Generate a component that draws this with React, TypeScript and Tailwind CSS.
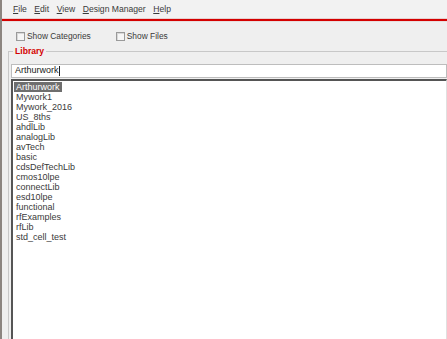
import { useState } from 'react';

const MENUS = [
  { key: 'F', rest: 'ile' },
  { key: 'E', rest: 'dit' },
  { key: 'V', rest: 'iew' },
  { key: 'D', rest: 'esign Manager' },
  { key: 'H', rest: 'elp' },
];

const LIBS = [
  'Arthurwork',
  'Mywork1',
  'Mywork_2016',
  'US_8ths',
  'ahdlLib',
  'analogLib',
  'avTech',
  'basic',
  'cdsDefTechLib',
  'cmos10lpe',
  'connectLib',
  'esd10lpe',
  'functional',
  'rfExamples',
  'rfLib',
  'std_cell_test',
];

function Check({ label }: { label: string }) {
  return (
    <label className="flex items-center gap-[2px]">
      <span className="w-[9px] h-[9px] border border-[#9a9a9a] bg-[#f6f6f6] shadow-[inset_1px_1px_0_#d8d8d8]" />
      <span>{label}</span>
    </label>
  );
}

export default function App() {
  const [selected] = useState('Arthurwork');

  return (
    <div className="w-[447px] h-[339px] overflow-hidden flex flex-col bg-[#efefef] border-l-2 border-[#8c8580] text-[8.4px] text-[#3a3a3a] font-['Liberation_Sans',Arial,sans-serif]">
      {/* Menu bar */}
      <div className="h-[18px] flex items-center gap-[7.5px] pl-[11px] bg-[#f2f2f2] text-[8.6px]">
        {MENUS.map((m) => (
          <span key={m.key}>
            <span className="underline underline-offset-1">{m.key}</span>
            {m.rest}
          </span>
        ))}
      </div>
      <div className="h-[1px] bg-[#e6d0d0]" />
      <div className="h-[2px] bg-[#d40000]" />
      <div className="h-[1px] bg-[#e8dede]" />

      {/* Options */}
      <div className="h-[24px] pt-[5px] flex items-center gap-[25px] pl-[14px]">
        <Check label="Show Categories" />
        <Check label="Show Files" />
      </div>

      {/* Library group */}
      <fieldset className="flex-1 flex flex-col ml-[6px] border-t border-l border-[#c8c8c8] min-h-0">
        <legend className="ml-[4px] px-[2px] text-[#d40000] font-bold leading-[10px] text-[8.6px]">Library</legend>
        <div className="pt-[8px] pl-[2px] flex flex-col flex-1 min-h-0">
          <div className="h-[14px] bg-white border border-[#bdbdbd] flex items-center pl-[3px] text-[9px] text-[#222]">
            Arthurwork<span className="w-[1px] h-[10px] bg-[#222]" />
          </div>
          <div className="mt-[1px] flex-1 bg-white border-t-2 border-l-2 border-[#555] border-r border-r-[#e0e0e0] pl-[1px] pt-[1px] text-[9px] text-[#3a3a3a]">
            {LIBS.map((lib) => (
              <div key={lib} className="h-[10px] leading-[10px] flex">
                <span
                  className={
                    lib === selected ? 'bg-[#6e6e6e] text-white px-[2px] w-[48px]' : 'px-[2px]'
                  }
                >
                  {lib}
                </span>
              </div>
            ))}
          </div>
        </div>
      </fieldset>
    </div>
  );
}
